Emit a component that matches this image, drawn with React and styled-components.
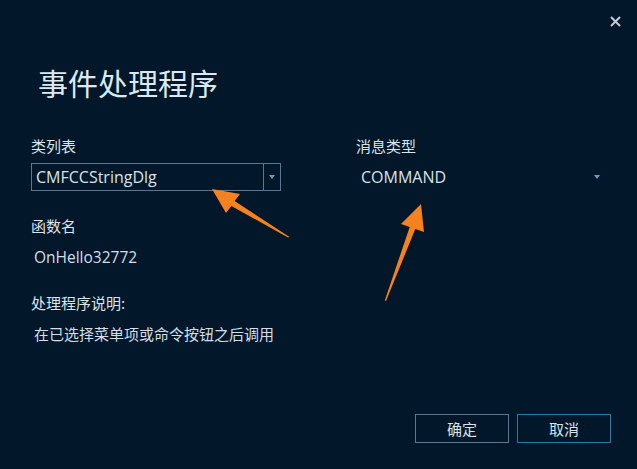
import React from 'react';
import styled, { createGlobalStyle } from 'styled-components';

const GlobalStyle = createGlobalStyle`
  html, body {
    margin: 0;
    padding: 0;
    background: #021729;
  }
  * {
    box-sizing: border-box;
  }
`;

const Dialog = styled.div`
  position: relative;
  width: 637px;
  height: 469px;
  overflow: hidden;
  background: #021729;
  color: #dbe5ec;
  font-family: "Noto Sans CJK SC", "Open Sans", sans-serif;
`;

const TopBar = styled.div`
  display: flex;
  justify-content: flex-end;
  align-items: center;
  height: 42px;
  padding-right: 15px;
`;

const CloseButton = styled.button`
  display: flex;
  align-items: center;
  justify-content: center;
  width: 14px;
  height: 14px;
  padding: 0;
  border: none;
  background: transparent;
  color: #c5ccd3;
  cursor: pointer;
`;

const Title = styled.h1`
  margin: 22px 0 0 38px;
  height: 36px;
  font-size: 30px;
  line-height: 36px;
  font-weight: 400;
  color: #dde9f1;
`;

const Fields = styled.div`
  display: grid;
  grid-template-columns: 250px 250px;
  column-gap: 75px;
  margin: 36px 0 0 31px;
`;

const Column = styled.div`
  display: flex;
  flex-direction: column;
`;

const Label = styled.div`
  height: 20px;
  font-size: 15px;
  line-height: 20px;
  margin-top: ${(p) => p.$gap || 0}px;
  color: #dbe4eb;
`;

const Value = styled.div`
  height: 20px;
  margin-top: 11px;
  padding-left: 3px;
  font-family: ${(p) => (p.$latin ? '"Open Sans", "Noto Sans CJK SC", sans-serif' : '"Noto Sans CJK SC", sans-serif')};
  font-size: ${(p) => (p.$latin ? 15.5 : 15)}px;
  line-height: 20px;
  color: #d3dfe8;
`;

const Combo = styled.div`
  display: flex;
  align-items: stretch;
  height: 28px;
  margin-top: 7px;
  border: 1px solid ${(p) => (p.$flat ? 'transparent' : '#5b778e')};
`;

const ComboText = styled.div`
  flex: 1;
  display: flex;
  align-items: center;
  padding-left: 4px;
  font-family: "Open Sans", "Noto Sans CJK SC", sans-serif;
  font-size: 16px;
  color: #d6e3ec;
`;

const ComboToggle = styled.div`
  display: flex;
  align-items: center;
  justify-content: center;
  width: 17px;
  border-left: 1px solid ${(p) => (p.$flat ? 'transparent' : '#5b778e')};
`;

const Caret = styled.span`
  width: 0;
  height: 0;
  margin-top: -1px;
  margin-right: ${(p) => (p.$light ? 1 : 0)}px;
  border-left: 3.5px solid transparent;
  border-right: 3.5px solid transparent;
  border-top: 4px solid ${(p) => (p.$light ? '#6b9fc2' : '#7c97ad')};
`;

const Footer = styled.div`
  display: flex;
  justify-content: flex-end;
  gap: 8px;
  margin-top: 70px;
  padding-right: 26px;
`;

const Button = styled.button`
  width: 94px;
  height: 29px;
  padding: 0;
  border: 1px solid ${(p) => (p.$accent ? '#2a7ba3' : '#5a7990')};
  background: transparent;
  color: #d8e3ea;
  font-family: "Noto Sans CJK SC", sans-serif;
  font-size: 15px;
  cursor: pointer;
`;

const Annotations = styled.svg`
  position: absolute;
  inset: 0;
  pointer-events: none;
`;

function CloseIcon() {
  return (
    <svg width="11" height="11" viewBox="0 0 11 11">
      <path d="M1 1 L10 10 M10 1 L1 10" stroke="currentColor" strokeWidth="2" />
    </svg>
  );
}

export default function App() {
  return (
    <>
      <GlobalStyle />
      <Dialog>
        <TopBar>
          <CloseButton aria-label="close">
            <CloseIcon />
          </CloseButton>
        </TopBar>
        <Title>事件处理程序</Title>

        <Fields>
          <Column>
            <Label>类列表</Label>
            <Combo>
              <ComboText>CMFCCStringDlg</ComboText>
              <ComboToggle>
                <Caret />
              </ComboToggle>
            </Combo>
            <Label $gap={25}>函数名</Label>
            <Value $latin>OnHello32772</Value>
            <Label $gap={26}>处理程序说明:</Label>
            <Value>在已选择菜单项或命令按钮之后调用</Value>
          </Column>
          <Column>
            <Label>消息类型</Label>
            <Combo $flat>
              <ComboText>COMMAND</ComboText>
              <ComboToggle $flat>
                <Caret $light />
              </ComboToggle>
            </Combo>
          </Column>
        </Fields>

        <Footer>
          <Button>确定</Button>
          <Button $accent>取消</Button>
        </Footer>

        <Annotations width="637" height="469" viewBox="0 0 637 469">
          <polygon
            points="212,189 240,194 234.6,201 289.5,237 288,237.5 231.4,206 226,213"
            fill="#f5821f"
          />
          <polygon
            points="421,204 424,232 415.3,229 386,301 384.8,300.5 409.7,227 401,224"
            fill="#f5821f"
          />
        </Annotations>
      </Dialog>
    </>
  );
}
